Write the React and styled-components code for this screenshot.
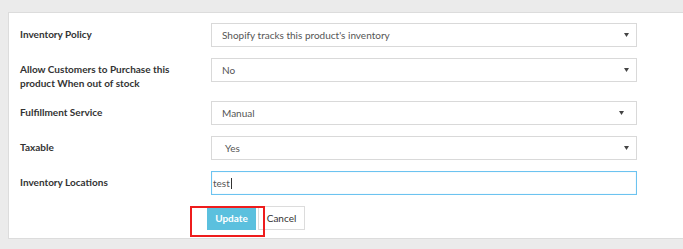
import React from 'react'
import styled, { createGlobalStyle } from 'styled-components'

const Global = createGlobalStyle`
  html, body { margin: 0; padding: 0; }
  body {
    background: #ebebeb;
    font-family: Lato, "Open Sans", sans-serif;
    width: 683px;
    height: 249px;
    overflow: hidden;
  }
`

const Page = styled.div`
  padding: 12px 0 0 8px;
`

const Panel = styled.div`
  background: #fff;
  border: 1px solid #dcdcdc;
  border-right: none;
  padding: 10px 0 8px 11px;
  display: flex;
  flex-direction: column;
  gap: 11px;
`

const Row = styled.div`
  display: grid;
  grid-template-columns: 191px 426px;
  align-items: start;
`

const Label = styled.div`
  font-size: 10px;
  font-weight: 700;
  color: #333;
  line-height: 14px;
  padding-top: 4px;
  width: 150px;
`

const Select = styled.div`
  height: 24px;
  box-sizing: border-box;
  border: 1px solid #d9d9d9;
  display: flex;
  align-items: center;
  justify-content: space-between;
  padding: 0 7px 0 ${({ $indent }) => $indent || 10}px;
  font-size: 10px;
  color: #555;
`

const Caret = styled.svg`
  width: 5px;
  height: 4px;
  fill: #444;
  margin-right: ${({ $shift }) => $shift || 0}px;
`

const Input = styled.div`
  height: 24px;
  box-sizing: border-box;
  border: 1px solid #6cc3f0;
  box-shadow: inset 0 0 1px #9ad6f5;
  display: flex;
  align-items: center;
  padding-left: 1px;
  font-size: 10px;
  color: #555;
`

const Cursor = styled.span`
  display: inline-block;
  width: 1px;
  height: 11px;
  background: #333;
  margin-left: 1px;
`

const Actions = styled.div`
  position: relative;
  display: flex;
  gap: 2px;
  padding-left: 187px;
`

const Button = styled.button`
  height: 24px;
  font-family: inherit;
  font-size: 10px;
  font-weight: ${({ $primary }) => ($primary ? 700 : 400)};
  color: ${({ $primary }) => ($primary ? '#fff' : '#333')};
  background: ${({ $primary }) => ($primary ? '#5bc0de' : '#fff')};
  border: 1px solid ${({ $primary }) => ($primary ? '#5bc0de' : '#dcdcdc')};
  border-radius: 0;
  padding: 0;
  width: ${({ $w }) => $w}px;
`

const Highlight = styled.div`
  position: absolute;
  left: 170px;
  top: 0;
  width: 71px;
  height: 27px;
  border: 2px solid #ee1c1c;
  pointer-events: none;
`

const Arrow = ({ shift }) => (
  <Caret viewBox="0 0 5 4" $shift={shift}>
    <path d="M0 0 H5 L2.5 4 Z" />
  </Caret>
)

const fields = [
  { label: 'Inventory Policy', value: "Shopify tracks this product's inventory" },
  { label: 'Allow Customers to Purchase this product When out of stock', value: 'No' },
  { label: 'Fulfillment Service', value: 'Manual', shift: 5 },
  { label: 'Taxable', value: 'Yes', indent: 13 },
]

export default function App() {
  return (
    <>
      <Global />
      <Page>
        <Panel>
          {fields.map((f) => (
            <Row key={f.label}>
              <Label>{f.label}</Label>
              <Select $indent={f.indent}>
                <span>{f.value}</span>
                <Arrow shift={f.shift} />
              </Select>
            </Row>
          ))}
          <Row>
            <Label>Inventory Locations</Label>
            <Input>
              test<Cursor />
            </Input>
          </Row>
          <Actions>
            <Button $primary $w={49}>Update</Button>
            <Button $w={47}>Cancel</Button>
            <Highlight />
          </Actions>
        </Panel>
      </Page>
    </>
  )
}
